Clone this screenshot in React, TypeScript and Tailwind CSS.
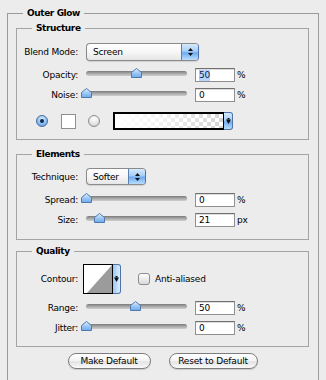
import React from "react";

function Thumb({ left }: { left: number }) {
  return (
    <svg
      className="absolute top-[0px]"
      style={{ left: left - 5 }}
      width="11"
      height="10"
      viewBox="0 0 11 10"
    >
      <defs>
        <linearGradient id="thg" x1="0" y1="0" x2="0" y2="1">
          <stop offset="0" stopColor="#e4f1fd" />
          <stop offset="0.5" stopColor="#9ec9f5" />
          <stop offset="1" stopColor="#6ea9ea" />
        </linearGradient>
      </defs>
      <polygon
        points="0.5,4.5 5.5,0.5 10.5,4.5 10.5,9.5 0.5,9.5"
        fill="url(#thg)"
        stroke="#4f78ad"
        strokeWidth="1"
        strokeLinejoin="round"
      />
    </svg>
  );
}

function Slider({ pos }: { pos: number }) {
  return (
    <div className="relative ml-[8px] w-[101px] h-[14px]">
      <div className="mt-[3px] h-[5px] rounded-full bg-[linear-gradient(#7a7a7a,#a9a9a9_50%,#cfcfcf)]" />
      <Thumb left={pos} />
    </div>
  );
}

function NumBox({ v, sel, unit }: { v: string; sel?: boolean; unit: string }) {
  return (
    <>
      <div className="ml-[8px] w-[40px] h-[14px] bg-white border border-[#8f8f8f] border-t-[#707070] shadow-[inset_0_1px_0_#dcdcdc] flex items-center pl-[3px] text-black">
        {sel ? <span className="bg-[#b5d5ff] leading-[11px] text-[#10204a]">{v}</span> : <span>{v}</span>}
      </div>
      <div className="ml-[2px]">{unit}</div>
    </>
  );
}

function SliderRow({
  label,
  pos,
  v,
  unit,
  sel,
  className,
}: {
  label: string;
  pos: number;
  v: string;
  unit: string;
  sel?: boolean;
  className: string;
}) {
  return (
    <div className={className}>
      <div className="w-[61px] text-right">{label}</div>
      <Slider pos={pos} />
      <NumBox v={v} sel={sel} unit={unit} />
    </div>
  );
}

function UpDown() {
  return (
    <div className="flex flex-col items-center gap-[2px]">
      <svg width="5" height="3" viewBox="0 0 5 3">
        <polygon points="2.5,0 5,3 0,3" fill="#111" />
      </svg>
      <svg width="5" height="3" viewBox="0 0 5 3">
        <polygon points="0,0 5,0 2.5,3" fill="#111" />
      </svg>
    </div>
  );
}

function Select({ text, w, h }: { text: string; w: string; h: string }) {
  return (
    <div
      className={`ml-[8px] ${w} ${h} flex rounded-[4px] border border-[#8b8b8b] border-r-[#4f73a8] overflow-hidden bg-[linear-gradient(#ffffff,#f6f6f6_50%,#e6e6e6)] shadow-[0_1px_1px_rgba(0,0,0,0.12)]`}
    >
      <div className="flex-1 pl-[6px] flex items-center">{text}</div>
      <div className="w-[17px] border-l border-[#5b80b5] bg-[linear-gradient(#d6e9fb,#a6cff7_45%,#6eaaf0_55%,#b9defc)] flex items-center justify-center">
        <UpDown />
      </div>
    </div>
  );
}

function DownArrow() {
  return (
    <svg width="5" height="6" viewBox="0 0 5 6">
      <rect x="1.5" y="0" width="2" height="1.5" fill="#111" />
      <polygon points="0,1.5 5,1.5 2.5,6" fill="#111" />
    </svg>
  );
}

function Legend({ children }: { children: React.ReactNode }) {
  return (
    <legend className="ml-[15px] px-[4px] font-bold text-[9px] tracking-[-0.4px] leading-[12px] text-black">
      {children}
    </legend>
  );
}

export default function App() {
  return (
    <div className="w-[326px] h-[380px] overflow-hidden bg-[#ececec] pt-[7px] px-[7px] font-['DejaVu_Sans',sans-serif] text-[9px] tracking-[-0.2px] leading-[12px] text-black">
      <fieldset className="border border-[#9a9a9a] h-[420px]">
        <Legend>Outer Glow</Legend>
        <div className="pl-[8px] pr-[9px] pt-[3px]">
          {/* Structure */}
          <fieldset className="border border-[#a4a4a4] pb-[9px]">
            <Legend>Structure</Legend>
            <div className="mt-[9px] h-[18px] flex items-center">
              <div className="w-[61px] text-right">Blend Mode:</div>
              <Select text="Screen" w="w-[113px]" h="h-[18px]" />
            </div>
            <SliderRow
              className="mt-[7px] h-[14px] flex items-center"
              label="Opacity:"
              pos={50}
              v="50"
              sel
              unit="%"
            />
            <SliderRow
              className="mt-[6px] h-[14px] flex items-center"
              label="Noise:"
              pos={0}
              v="0"
              unit="%"
            />
            <div className="mt-[10px] h-[18px] flex items-center">
              <div className="ml-[19px] w-[12px] h-[12px] rounded-full border border-[#466b9f] bg-[radial-gradient(circle_at_50%_30%,#d9ecfd,#8dbff4_55%,#4a8fe0)] flex items-center justify-center">
                <div className="w-[4px] h-[4px] rounded-full bg-[#13264a]" />
              </div>
              <div className="ml-[13px] w-[15px] h-[15px] bg-white border border-[#8e8e8e]" />
              <div className="ml-[12px] w-[12px] h-[12px] rounded-full border border-[#8c8c8c] bg-[radial-gradient(circle_at_50%_30%,#ffffff,#e6e6e6_55%,#c4c4c4)]" />
              <div className="ml-[13px] w-[111px] h-[18px] border-2 border-r border-black bg-[conic-gradient(#d4d4d4_25%,#ffffff_0_50%,#d4d4d4_0_75%,#ffffff_0)] bg-[length:8px_8px]">
                <div className="w-full h-full bg-gradient-to-r from-white via-white/60 to-transparent" />
              </div>
              <div className="w-[9px] h-[18px] border border-l-0 border-[#4f73a8] rounded-r-[3px] bg-[linear-gradient(#d6e9fb,#a6cff7_45%,#6eaaf0_55%,#b9defc)] flex items-center justify-center">
                <DownArrow />
              </div>
            </div>
          </fieldset>

          {/* Elements */}
          <fieldset className="mt-[8px] border border-[#a4a4a4] pb-[12px]">
            <Legend>Elements</Legend>
            <div className="mt-[8px] h-[17px] flex items-center">
              <div className="w-[61px] text-right">Technique:</div>
              <Select text="Softer" w="w-[60px]" h="h-[17px]" />
            </div>
            <SliderRow
              className="mt-[8px] h-[14px] flex items-center"
              label="Spread:"
              pos={0}
              v="0"
              unit="%"
            />
            <SliderRow
              className="mt-[6px] h-[14px] flex items-center"
              label="Size:"
              pos={13}
              v="21"
              unit="px"
            />
          </fieldset>

          {/* Quality */}
          <fieldset className="mt-[5px] border border-[#a4a4a4] pb-[11px]">
            <Legend>Quality</Legend>
            <div className="mt-[7px] h-[30px] flex items-center">
              <div className="w-[61px] text-right">Contour:</div>
              <div className="ml-[5px] w-[38px] h-[30px] flex">
                <div className="w-[30px] h-[30px] border border-black bg-white">
                  <svg width="28" height="28" viewBox="0 0 28 28" className="block">
                    <polygon points="3,28 28,0 28,28" fill="#9b9b9b" />
                  </svg>
                </div>
                <div className="w-[8px] h-[30px] border border-l-0 border-[#4f73a8] rounded-r-[3px] bg-[linear-gradient(90deg,#9cc8f4,#dcefff)] flex items-center justify-center">
                  <DownArrow />
                </div>
              </div>
              <div className="ml-[17px] w-[12px] h-[12px] rounded-[3px] border border-[#8c8c8c] bg-[linear-gradient(#ffffff,#ececec_50%,#d9d9d9)]" />
              <div className="ml-[5px]">Anti-aliased</div>
            </div>
            <SliderRow
              className="mt-[7px] h-[14px] flex items-center"
              label="Range:"
              pos={49}
              v="50"
              unit="%"
            />
            <SliderRow
              className="mt-[6px] h-[14px] flex items-center"
              label="Jitter:"
              pos={0}
              v="0"
              unit="%"
            />
          </fieldset>

          <div className="mt-[6px] flex justify-center gap-[18px]">
            <div className="w-[83px] h-[16px] rounded-full border border-[#7d7d7d] bg-[linear-gradient(#ffffff,#f3f3f3_50%,#e2e2e2_55%,#fafafa)] flex items-center justify-center shadow-[0_1px_1px_rgba(0,0,0,0.15)]">
              Make Default
            </div>
            <div className="w-[89px] h-[16px] rounded-full border border-[#7d7d7d] bg-[linear-gradient(#ffffff,#f3f3f3_50%,#e2e2e2_55%,#fafafa)] flex items-center justify-center shadow-[0_1px_1px_rgba(0,0,0,0.15)]">
              Reset to Default
            </div>
          </div>
        </div>
      </fieldset>
    </div>
  );
}
